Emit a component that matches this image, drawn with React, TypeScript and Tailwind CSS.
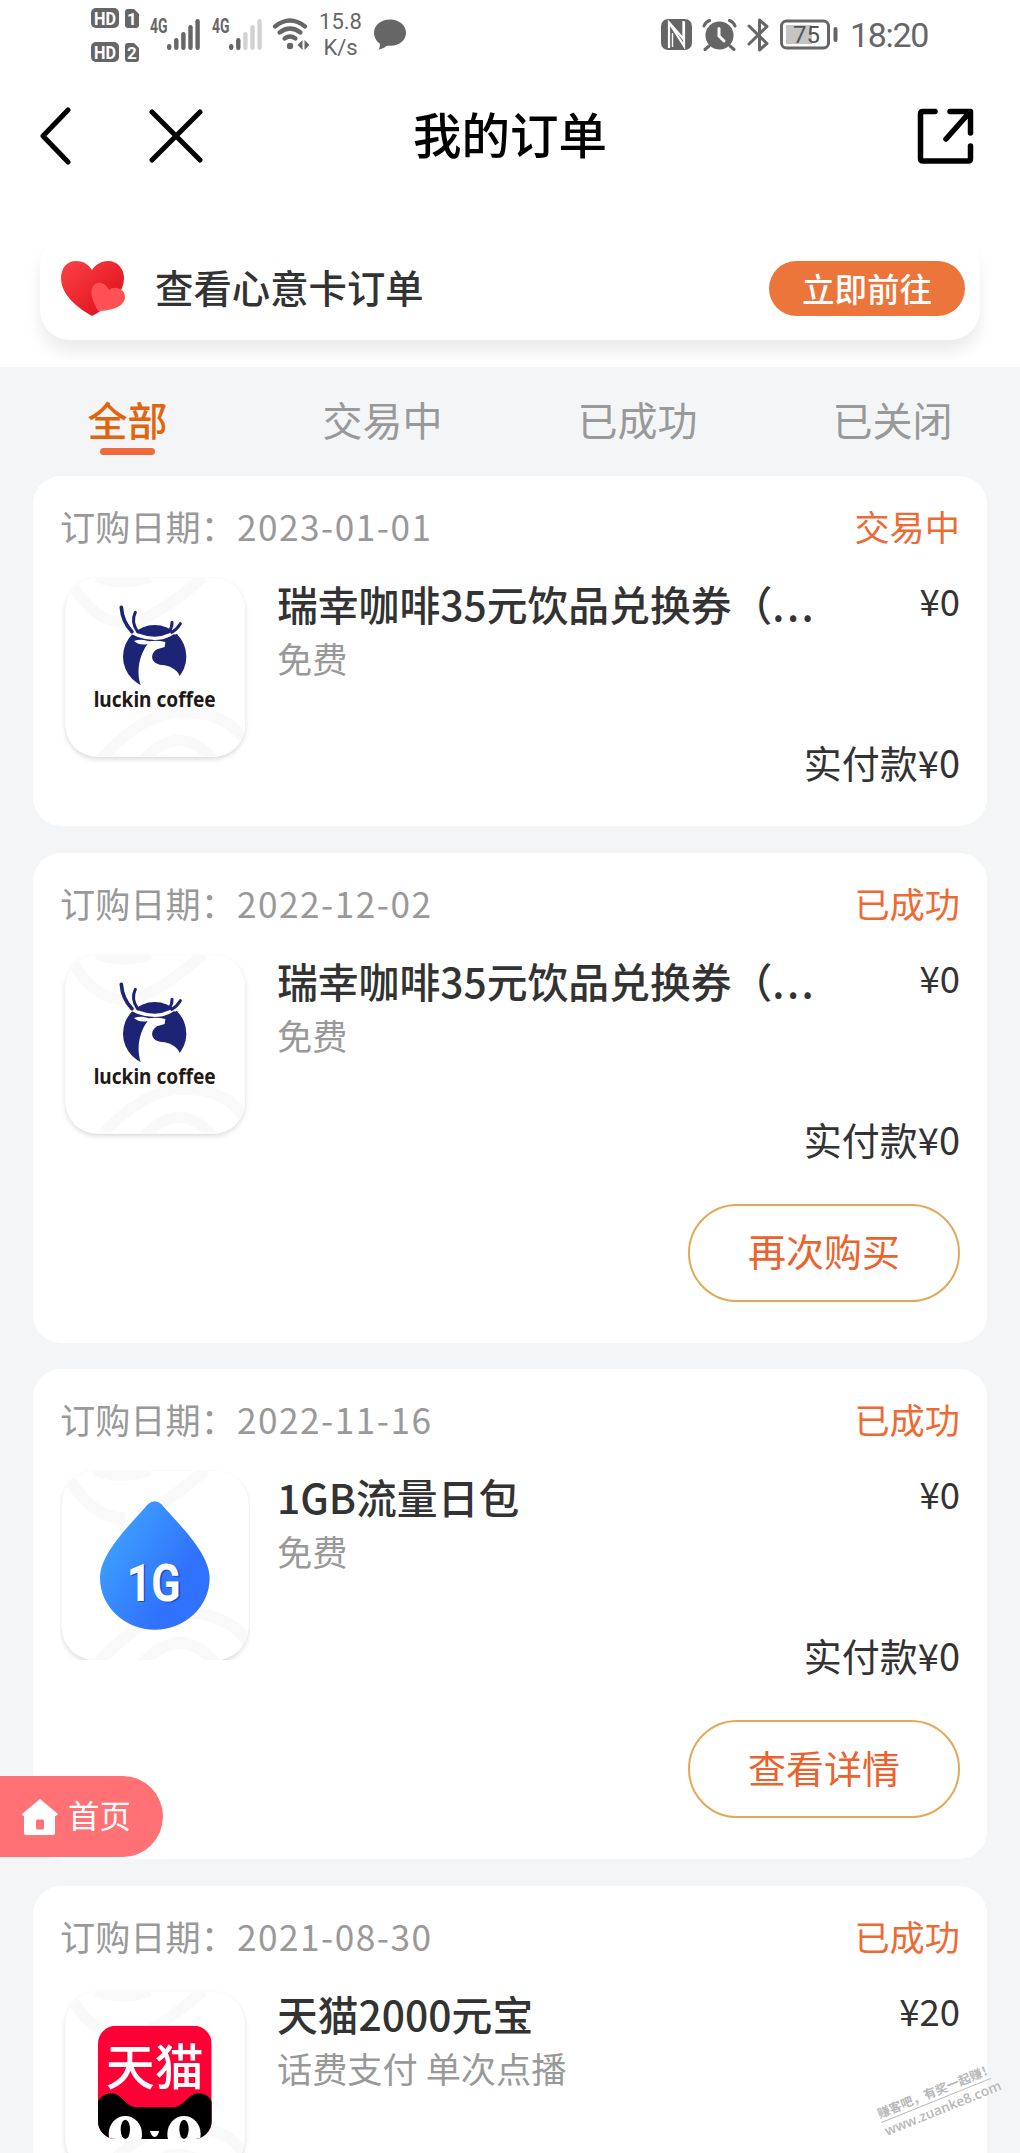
import type { ReactNode } from 'react';

type ThumbKind = 'luckin' | 'data' | 'tmall';

interface Order {
  id: number;
  date: string;
  status: string;
  title: string;
  truncated?: boolean;
  subtitle: string;
  price: string;
  paid?: string;
  action?: string;
  thumb: ThumbKind;
}

const orders: Order[] = [
  { id: 1, date: '2023-01-01', status: '交易中', title: '瑞幸咖啡35元饮品兑换券（', truncated: true, subtitle: '免费', price: '¥0', paid: '¥0', thumb: 'luckin' },
  { id: 2, date: '2022-12-02', status: '已成功', title: '瑞幸咖啡35元饮品兑换券（', truncated: true, subtitle: '免费', price: '¥0', paid: '¥0', action: '再次购买', thumb: 'luckin' },
  { id: 3, date: '2022-11-16', status: '已成功', title: '1GB流量日包', subtitle: '免费', price: '¥0', paid: '¥0', action: '查看详情', thumb: 'data' },
  { id: 4, date: '2021-08-30', status: '已成功', title: '天猫2000元宝', subtitle: '话费支付 单次点播', price: '¥20', thumb: 'tmall' },
];

const tabs = ['全部', '交易中', '已成功', '已关闭'];

function SimBadges() {
  return (
    <svg width="50" height="56" viewBox="0 0 50 56" className="mb-px">
      {[0, 34].map((y, i) => (
        <g key={y}>
          <rect x="1" y={y + 1} width="28" height="20" rx="5" fill="#666" />
          <text x="4" y={y + 17.5} textLength="22" lengthAdjust="spacingAndGlyphs" fontSize="18" fontWeight="700" fontFamily="Roboto, sans-serif" fill="#fff">HD</text>
          <path d={`M38 ${y + 2}h6l5 5v11q0 3-3 3h-8q-3 0-3-3v-13q0-3 3-3z`} fill="#666" />
          <text x="42" y={y + 18} textAnchor="middle" fontSize="17" fontWeight="700" fontFamily="Roboto, sans-serif" fill="#fff">{i + 1}</text>
        </g>
      ))}
    </svg>
  );
}

function Signal({ level }: { level: number }) {
  const heights = [6, 12, 18, 25, 31];
  return (
    <svg width="51" height="34" viewBox="0 0 51 34" className="mb-[3px]">
      <text x="0" y="15.5" textLength="17.5" lengthAdjust="spacingAndGlyphs" fontSize="20" fontWeight="700" fontFamily="Roboto, sans-serif" fill="#666">4G</text>
      {heights.map((h, i) => (
        <rect key={h} x={17 + i * 7.1} y={33 - h} width="4.4" height={h} rx="2.2" fill={i < level ? '#666' : '#d2d2d2'} />
      ))}
    </svg>
  );
}

function Wifi() {
  return (
    <svg width="38" height="33" viewBox="0 0 38 33" className="mb-[2px]" fill="none" stroke="#666" strokeWidth="4.200" strokeLinecap="round">
      <path d="M3 8.500Q18 -3.500 33 8.500" />
      <path d="M7.500 14.500Q18 6.500 28.500 14.500" />
      <path d="M12.500 20.500Q18 16.500 23.500 20.500" />
      <circle cx="18" cy="28" r="3.200" fill="#666" stroke="none" />
      <path d="M25.500 27l5-5v10zM37.500 27l-5-5v10z" fill="#666" stroke="none" />
    </svg>
  );
}

function StatusBar() {
  return (
    <div className="flex h-[70px] items-center justify-between pl-[90px] pr-[91px] text-[#666]">
      <div className="flex items-center">
        <SimBadges />
        <div className="ml-2.5 flex gap-[11px]">
          <Signal level={5} />
          <Signal level={2} />
        </div>
        <div className="ml-[9px]">
          <Wifi />
        </div>
        <div className="ml-[9px] w-[43px] text-center font-['Roboto',sans-serif] text-[22px] leading-[26px]">
          <div className="whitespace-nowrap">15.8</div>
          <div className="whitespace-nowrap">K/s</div>
        </div>
        <svg width="34" height="32" viewBox="0 0 34 32" className="ml-[11px]" fill="#666">
          <path d="M17 .5c9 0 16 5.600 16 13.200s-7 13-15 13c-2.500 0-3.500-.2-5 .6-2 1.600-4 2.900-7.200 3.200 1-2 1.400-3.800.9-6C3 22 1 18 1 13.700 1 6 8 .5 17 .5z" />
        </svg>
      </div>
      <div className="flex items-center">
        <svg width="31" height="31" viewBox="0 0 31 31" className="mb-0.5">
          <rect width="31" height="31" rx="7" fill="#666" />
          <path d="M8 29V3.500L22.500 20V2" fill="none" stroke="#fff" strokeWidth="2.200" />
          <path d="M8 3.500L23 27V3" fill="none" stroke="#fff" strokeWidth="2.200" />
          <path d="M11.500 14v14" fill="none" stroke="#fff" strokeWidth="1.400" />
        </svg>
        <svg width="35" height="32" viewBox="0 0 35 32" className="mb-px ml-2.5">
          <circle cx="17.500" cy="16.500" r="14" fill="#666" />
          <path d="M2 7Q3.500 3 7.500 1.500M33 7Q31.500 3 27.500 1.500M7 27l-4 3.500M28 27l4 3.500" fill="none" stroke="#666" strokeWidth="3" strokeLinecap="round" />
          <path d="M17 9.500v7.500l5 5" fill="none" stroke="#fff" strokeWidth="3" strokeLinecap="round" />
        </svg>
        <svg width="23" height="34" viewBox="0 0 23 34" className="mb-px ml-2.5" fill="none" stroke="#666" strokeWidth="3" strokeLinejoin="round" strokeLinecap="round">
          <path d="M2 8l18 17.500-7.500 6.500V2l7.500 6.500L2 26" />
        </svg>
        <svg width="58" height="31" viewBox="0 0 58 31" className="mb-px ml-[10px]">
          <rect x="1.500" y="2" width="47" height="27" rx="5" fill="none" stroke="#666" strokeWidth="3" />
          <rect x="6" y="6" width="26" height="19" fill="#c4c4c4" />
          <text x="26.500" y="24" textAnchor="middle" fontSize="24" fontFamily="Roboto, sans-serif" fill="#555">75</text>
          <rect x="53.500" y="8" width="4" height="15" rx="2" fill="#666" />
        </svg>
        <div className="ml-[12px] w-[79px] whitespace-nowrap font-['Roboto',sans-serif] text-[34px] leading-none tracking-[-1.3px]">18:20</div>
      </div>
    </div>
  );
}

function NavBar() {
  return (
    <div className="flex h-[132px] items-center justify-between pl-[38px] pr-[46px]">
      <div className="flex w-[240px] items-center gap-[77px]">
        <svg width="34" height="58" viewBox="0 0 34 58" fill="none" stroke="#000" strokeWidth="5" strokeLinecap="round" strokeLinejoin="round">
          <path d="M30 3L5 29l25 26" />
        </svg>
        <svg width="54" height="54" viewBox="0 0 54 54" fill="none" stroke="#000" strokeWidth="5" strokeLinecap="round">
          <path d="M3 3l48 48M51 3L3 51" />
        </svg>
      </div>
      <h1 className="pb-[5px] text-[48.500px] font-medium leading-none text-black">我的订单</h1>
      <div className="flex w-[232px] justify-end">
        <svg width="57" height="57" viewBox="0 0 57 57" fill="none" stroke="#000" strokeWidth="5.500" strokeLinecap="round" strokeLinejoin="round">
          <path d="M18 3.500H6q-2.500 0-2.500 2.500v44.500q0 2.500 2.500 2.500h45q2.500 0 2.500-2.500V38" />
          <path d="M33 3.500h20.500V25M52.500 4.500L29 31" />
        </svg>
      </div>
    </div>
  );
}

function GiftBanner() {
  return (
    <div className="px-10 pb-[27px] pt-[34px]">
      <div className="flex h-[104px] items-center rounded-[30px] bg-white pl-5 pr-[15px] shadow-[0_12px_16px_rgba(0,0,0,0.08)]">
        <svg width="67" height="57" viewBox="0 0 67 57">
          <defs>
            <linearGradient id="heart" x1="0" y1="0" x2="1" y2="1">
              <stop offset="0" stopColor="#fb4248" />
              <stop offset="1" stopColor="#dd0a14" />
            </linearGradient>
          </defs>
          <path d="M32 56C20 49 1 36 1 18 1 8 7 1 16 1c8 0 13 4 16 9C35 5 41 1 48 1c10 0 16 8 16 17 0 18-20 32-32 38z" fill="url(#heart)" />
          <path d="M38 51c-4-8-8-16-6-22 2-8 12-9 17 1 6-5 16-1 16 7 0 9-13 14-27 14z" fill="#ff5257" />
        </svg>
        <span className="ml-[28px] pb-[3px] text-[38.400px] font-medium leading-none text-[#333]">查看心意卡订单</span>
        <button className="ml-auto flex h-[55px] w-[196px] items-center justify-center rounded-full bg-[#ec753b] text-[32.500px] font-medium leading-none text-white">
          立即前往
        </button>
      </div>
    </div>
  );
}

function Tabs() {
  return (
    <div className="grid h-[109px] grid-cols-4 pt-8">
      {tabs.map((tab, i) => (
        <div key={tab} className="flex flex-col items-center">
          <span className={i === 0 ? 'text-[40px] font-medium leading-[40px] text-[#e2640f]' : 'text-[40px] leading-[40px] text-[#999]'}>{tab}</span>
          {i === 0 && <span className="mt-[9px] h-[7px] w-[55px] rounded-full bg-[#f0693b]" />}
        </div>
      ))}
    </div>
  );
}

// All thumbnails are drawn on a 570 unit square
function Tile({ transform, children }: { transform?: string; children: ReactNode }) {
  return (
    <svg width="190" height="190" viewBox="0 0 570 570" className="shrink-0">
      <defs>
        <filter id="tileShadow" x="-10%" y="-10%" width="120%" height="120%">
          <feDropShadow dx="0" dy="7" stdDeviation="8" floodColor="#000" floodOpacity="0.15" />
        </filter>
        <clipPath id="tileClip">
          <rect x="17" y="4" width="538" height="535" rx="95" />
        </clipPath>
      </defs>
      <g transform={transform}>
        <rect x="17" y="4" width="538" height="535" rx="95" fill="#fff" filter="url(#tileShadow)" />
        <g clipPath="url(#tileClip)" fill="none" stroke="#f9f9f9" strokeWidth="34">
          <path d="M40 30Q110 140 200 138M240 130Q330 90 430 0M110 0Q190 30 270 0" />
          <path d="M110 560Q250 400 380 405T560 500M240 560Q360 420 470 560" />
        </g>
      </g>
      {children}
    </svg>
  );
}

function LuckinThumb() {
  return (
    <Tile>
      <g transform="translate(-31 -21)">
        <circle cx="315" cy="260" r="95" fill="#1e2475" />
        <path d="M273 360V345C258 300 272 250 294 222Q270 228 253 213Q275 205 298 214Q320 209 347 216L345 231L322 238C298 253 302 285 345 286C368 290 384 303 390 318L412 312V370H273z" fill="#fff" />
        <path d="M225 172C245 190 280 205 315 205S370 190 400 168" fill="none" stroke="#fff" strokeWidth="10" />
        <path d="M226 158L266 188L262 198L222 182zM366 186L392 160L404 176L376 194z" fill="#fff" />
        <g fill="none" stroke="#1e2475" strokeLinecap="round">
          <path d="M215 112Q218 155 247 185" strokeWidth="11" />
          <path d="M257 127Q243 155 264 186" strokeWidth="9" />
          <path d="M392 161Q382 178 366 187" strokeWidth="9" />
          <path d="M367 157Q368 170 358 185" strokeWidth="9" />
        </g>
        <text x="132" y="412" textLength="366" lengthAdjust="spacingAndGlyphs" fontSize="65" fontWeight="700" fontFamily="'Noto Sans', sans-serif" fill="#231815">luckin coffee</text>
      </g>
    </Tile>
  );
}

function DataThumb() {
  return (
    <Tile transform="translate(-12 -1) scale(1.040 1.060)">
      <defs>
        <linearGradient id="drop" x1="0.1" y1="0.35" x2="0.65" y2="0.75">
          <stop offset="0" stopColor="#3c9bff" />
          <stop offset="1" stopColor="#3071fd" />
        </linearGradient>
      </defs>
      <path d="M264 102Q284 86 304 102C350 157 449 247 449 324A164.500 155 0 0 1 120 324C120 247 218 157 264 102z" fill="url(#drop)" />
      <g fontSize="155" fontWeight="700" fontFamily="Roboto, sans-serif">
        <text x="205" y="397" textLength="162" lengthAdjust="spacingAndGlyphs" fill="#1c4fc4">1G</text>
        <text x="200" y="392" textLength="162" lengthAdjust="spacingAndGlyphs" fill="#fff">1G</text>
      </g>
    </Tile>
  );
}

function TmallThumb() {
  return (
    <Tile transform="translate(-1 12)">
      <defs>
        <clipPath id="tmallClip">
          <rect x="295" y="797" width="341" height="340" rx="54" />
        </clipPath>
      </defs>
      <g transform="translate(-181 -681)">
        <g clipPath="url(#tmallClip)">
          <rect x="295" y="797" width="341" height="340" fill="#ff0036" />
          <path d="M290 1040C295 1010 318 1000 338 1000C365 1002 375 1035 405 1042H525C556 1035 566 1002 594 1000C615 1000 634 1010 640 1035V1140H290z" fill="#000" />
          <ellipse cx="377" cy="1122" rx="50" ry="54" fill="#fff" />
          <ellipse cx="553" cy="1122" rx="50" ry="54" fill="#fff" />
          <ellipse cx="377" cy="1108" rx="14" ry="29" fill="#000" />
          <ellipse cx="553" cy="1108" rx="14" ry="29" fill="#000" />
          <path d="M451 1113h27q-3 17-13 18-10-1-14-18z" fill="#fff" />
        </g>
        <text x="318" y="975" fontSize="147" fontWeight="500" fontFamily="'Noto Sans CJK SC', sans-serif" fill="#fff">天猫</text>
      </g>
    </Tile>
  );
}

const thumbs: Record<ThumbKind, () => ReactNode> = {
  luckin: LuckinThumb,
  data: DataThumb,
  tmall: TmallThumb,
};

function OrderCard({ order }: { order: Order }) {
  const Thumb = thumbs[order.thumb];
  return (
    <div className={order.action ? 'h-[489.900px] rounded-[28px] bg-white px-[27px] pt-8' : 'h-[350.200px] rounded-[28px] bg-white px-[27px] pt-8'}>
      <div className="flex h-9 items-center justify-between text-[35.200px] leading-9">
        <div className="text-[#999]">
          订购日期：<span className="ml-px tracking-[1.500px]">{order.date}</span>
        </div>
        <div className="text-[#ee6a34]">{order.status}</div>
      </div>
      <div className="mt-[33px] flex">
        <Thumb />
        <div className="ml-[27px] flex-1">
          <div className="mt-1.5 whitespace-nowrap text-[40.800px] font-medium leading-[42px] text-[#333]">
            {order.title}
            {order.truncated && <span className="tracking-[2.500px]">...</span>}
          </div>
          <div className="mt-[15px] text-[35.200px] leading-9 text-[#999]">{order.subtitle}</div>
        </div>
        <div className="mt-[5px] text-[36.500px] leading-[38px] text-[#333]">{order.price}</div>
      </div>
      {order.paid && <div className="-mt-6 text-right text-[38px] leading-[38px] text-[#333]">实付款{order.paid}</div>}
      {order.action && (
        <div className="mt-[46px] flex justify-end">
          <button className="flex h-[98px] w-[272px] items-center justify-center rounded-full border-2 border-[#e5a858] pb-[5px] text-[38px] leading-none text-[#ec622c]">
            {order.action}
          </button>
        </div>
      )}
    </div>
  );
}

export default function App() {
  return (
    <div className="relative h-[2153px] w-[1020px] overflow-hidden bg-[#f3f5f7] font-['Noto_Sans_CJK_SC',sans-serif]">
      <div className="bg-white">
        <StatusBar />
        <NavBar />
        <GiftBanner />
      </div>
      <Tabs />
      <div className="flex flex-col gap-[26.600px] px-[33px]">
        {orders.map((order) => (
          <OrderCard key={order.id} order={order} />
        ))}
      </div>

      {/* Floating home shortcut */}
      <div className="absolute left-0 top-[1776px] flex h-[81px] w-[163px] items-center rounded-r-full bg-[#ff7175] pl-[22px] text-white">
        <svg width="36" height="36" viewBox="0 0 36 36">
          <path d="M18 0l18 15-2 2h-1v17q0 2-2 2H4q-2 0-2-2V17H1l-1-2z" fill="#fff" />
          <rect x="14" y="20.500" width="8" height="10" rx="1.500" fill="#ff7175" />
        </svg>
        <span className="ml-[10px] pb-[3px] text-[31.500px] leading-none">首页</span>
      </div>

      {/* Watermark */}
      <div className="absolute left-[877px] top-[2082px] w-[118px] -rotate-[22deg] font-bold text-[#b8b8b8]">
        <div className="whitespace-nowrap border-b border-[#b8b8b8] text-[12.400px] leading-[18px]">赚客吧，有奖一起赚！</div>
        <div className="whitespace-nowrap font-['Open_Sans',sans-serif] text-[13.700px] font-semibold leading-[17px]">www.zuanke8.com</div>
      </div>
    </div>
  );
}
